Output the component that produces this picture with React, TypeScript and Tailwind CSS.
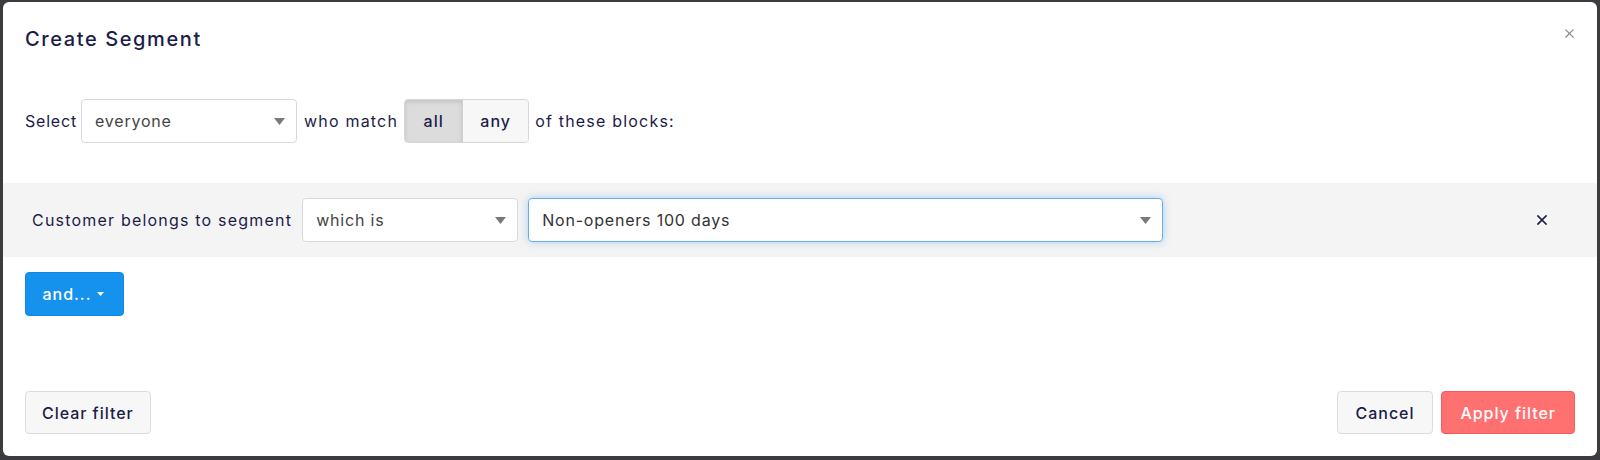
import React from 'react';

const font = { fontFamily: 'Inter, "Noto Sans", sans-serif' };

const Caret: React.FC<{ className?: string }> = ({ className }) => (
  <svg width="11" height="7" viewBox="0 0 11 7" className={className}>
    <path d="M0 0h11L5.5 7z" fill="currentColor" />
  </svg>
);

const Cross: React.FC<{ size: number; stroke: number; className?: string }> = ({ size, stroke, className }) => (
  <svg width={size} height={size} viewBox="0 0 10 10" className={className}>
    <path d="M1 1l8 8M9 1l-8 8" stroke="currentColor" strokeWidth={stroke} strokeLinecap="square" />
  </svg>
);

const SelectBox: React.FC<{ value: string; width: string; focused?: boolean; textClass?: string }> = ({
  value,
  width,
  focused,
  textClass = 'text-[#444]',
}) => (
  <div
    className={`${width} h-[44px] shrink-0 flex items-center justify-between pl-[13px] pr-[11px] bg-white rounded-[4px] border ${
      focused ? 'border-[#6aaeea] shadow-[0_0_8px_rgba(102,175,233,0.55)]' : 'border-[#d9d9d9]'
    }`}
  >
    <span className={`text-[16px] tracking-[0.05em] ${textClass}`}>{value}</span>
    <Caret className="text-[#7a7a7a]" />
  </div>
);

export default function App() {
  return (
    <div className="h-[460px] bg-[#3b3b40] pt-[2px] px-[3px] pb-[4px]" style={font}>
      <div className="h-full bg-white rounded-[6px] flex flex-col text-[#1c1c48]">
        {/* Header */}
        <div className="flex items-start justify-between pl-[22px] pr-[23px] pt-[23px]">
          <h1 className="text-[20px] leading-[28px] font-medium tracking-[0.08em]">Create Segment</h1>
          <Cross size={9} stroke={1.3} className="text-[#8a8a8a] mt-[4px]" />
        </div>

        {/* Select row */}
        <div className="flex items-center gap-[6px] px-[22px] mt-[46px] text-[16px] tracking-[0.075em]">
          <span className="tracking-[0.05em] mr-[-2px]">Select</span>
          <SelectBox value="everyone" width="w-[216px]" />
          <span className="ml-[1px]">who match</span>
          <div className="flex h-[44px] rounded-[4px] border border-[#d6d6d6] overflow-hidden font-medium tracking-[0.06em]">
            <div className="w-[58px] flex items-center justify-center bg-[#dcdcdc] shadow-[inset_0_2px_4px_rgba(0,0,0,0.12)] border-r border-[#cfcfcf]">
              all
            </div>
            <div className="w-[65px] flex items-center justify-center bg-[#f7f7f7]">any</div>
          </div>
          <span>of these blocks:</span>
        </div>

        {/* Condition block */}
        <div className="mt-[40px] h-[74px] bg-[#f4f4f4] flex items-center pl-[29px] pr-[50px]">
          <span className="text-[16px] tracking-[0.075em] mr-[10px]">Customer belongs to segment</span>
          <SelectBox value="which is" width="w-[216px]" />
          <div className="w-[10px]" />
          <SelectBox value="Non-openers 100 days" width="w-[635px]" focused textClass="text-[#333]" />
          <div className="flex-1" />
          <Cross size={10} stroke={1.7} className="text-[#1c1c48]" />
        </div>

        {/* and... */}
        <div className="px-[22px] mt-[15px]">
          <button className="h-[44px] w-[99px] rounded-[4px] bg-[#1592ee] border border-[#1188e0] text-white text-[16px] font-medium tracking-[0.06em] flex items-center justify-center gap-[6px] pr-[2px]">
            and...
            <svg width="7" height="4" viewBox="0 0 7 4">
              <path d="M0 0h7L3.5 4z" fill="currentColor" />
            </svg>
          </button>
        </div>

        {/* Footer */}
        <div className="mt-auto flex items-center justify-between px-[22px] pb-[22px]">
          <button className="h-[43px] px-[16px] rounded-[4px] bg-[#f7f7f7] border border-[#dcdcdc] text-[16px] font-medium tracking-[0.06em]">
            Clear filter
          </button>
          <div className="flex gap-[8px]">
            <button className="h-[43px] px-[18px] rounded-[4px] bg-[#f7f7f7] border border-[#dcdcdc] text-[16px] font-medium tracking-[0.06em]">
              Cancel
            </button>
            <button className="h-[43px] px-[18px] rounded-[4px] bg-[#ff7070] border border-[#f45c5c] text-white text-[16px] font-medium tracking-[0.06em]">
              Apply filter
            </button>
          </div>
        </div>
      </div>
    </div>
  );
}
